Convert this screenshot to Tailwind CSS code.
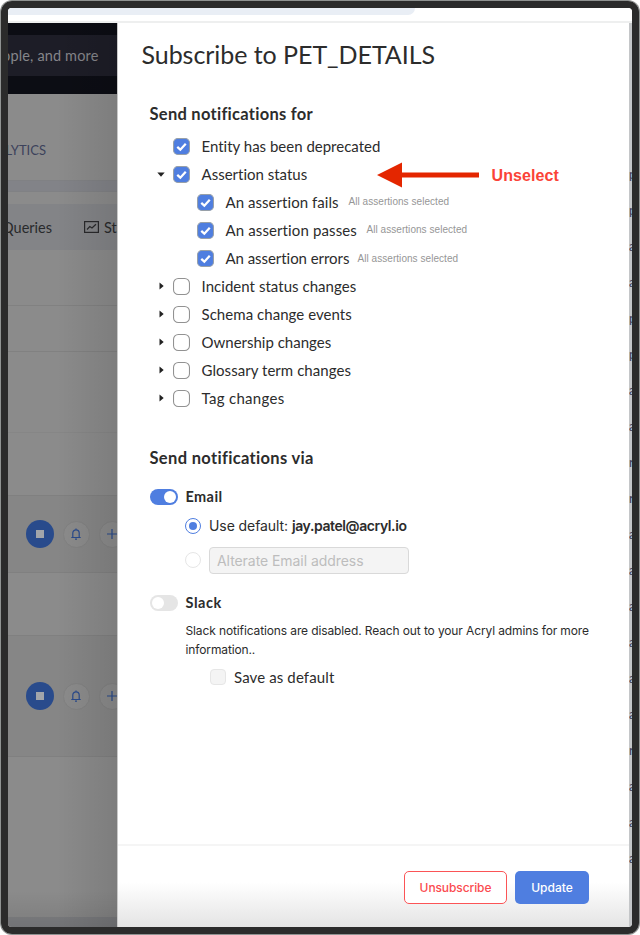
<!DOCTYPE html>
<html lang="en">
<head>
<meta charset="utf-8">
<title>Subscribe to PET_DETAILS</title>
<script src="https://cdn.jsdelivr.net/npm/@tailwindcss/browser@4"></script>
</head>
<body class="bg-white overflow-hidden font-['Lato',sans-serif] text-[#2c2c2c] [font-variant-ligatures:none]">
<svg class="hidden">
  <symbol id="check" viewBox="0 0 16 16"><rect x=".5" y=".5" width="15" height="15" rx="4" fill="#4f7ee0" stroke="#98a0a8"/><path d="M4 8.300 6.900 11 12 5.300" fill="none" stroke="#fff" stroke-width="2.100"/></symbol>
  <symbol id="box" viewBox="0 0 16 16"><rect x=".5" y=".5" width="15" height="15" rx="4.500" fill="#fff" stroke="#929292"/></symbol>
  <symbol id="bell" viewBox="0 0 12 12"><path d="M2.800 9.300V5a3.200 3.200 0 0 1 6.400 0v4.300M1.300 9.500h9.400M6 .5v1.300M5 11.200h2" fill="none" stroke="#294a8c" stroke-width="1.200"/></symbol>
  <symbol id="plus" viewBox="0 0 12 12"><path d="M6 1v10M1 6h10" fill="none" stroke="#294a8c" stroke-width="1.200"/></symbol>
</svg>
<div class="w-[638px] h-[933px] m-px rounded-[11px] border-7 border-[#2b2b2b] ring-1 ring-[#8f9291] overflow-hidden flex flex-col whitespace-nowrap">
  <!-- browser strip -->
  <div class="h-[15px] shrink-0 bg-white border-b-2 border-[#eeefef]"><div class="h-[7px] w-[407px] bg-[#e9eef5] rounded-br-[10px]"></div></div>
  <div class="flex-1 flex min-h-0">
    <!-- dimmed page -->
    <div class="relative w-[109px] shrink-0 bg-[#8b8b8b] overflow-hidden flex flex-col">
      <div class="h-[71px] shrink-0 bg-[#0c0d14] pt-[12px]"><div class="h-[41px] bg-[#1d1d27] flex items-center justify-end pr-[18.500px] text-[14.5px] tracking-[0.150px] text-[#85858a]">people, and more</div></div>
      <div class="h-[86px] shrink-0 flex items-center justify-end pr-[71px] pt-[27px] text-[13px] text-[#3c425b]">ANALYTICS</div>
      <div class="h-[12px] shrink-0 bg-[#828388] border-y border-[#808184]"></div>
      <div class="h-[12px] shrink-0"></div>
      <div class="h-[46px] shrink-0 bg-[#838487] flex items-center text-[14.5px] text-[#292a2c]">
        <span class="w-[44px] flex justify-end shrink-0 pt-[2px]">Queries</span>
        <svg class="ml-[32px] mr-[5px] w-[15px] h-[12px] shrink-0" viewBox="0 0 15 12" fill="none" stroke="#29292b"><rect x=".6" y=".6" width="13.800" height="10.800" stroke-width="1.200"/><path d="M3 8.500 5.800 5.500 8 7 12 3.300" stroke-width="1.200"/></svg><span class="pt-[2px]">Stats</span>
      </div>
      <div class="h-[56px] shrink-0 border-b border-[#818181]"></div>
      <div class="h-[46px] shrink-0 border-b border-[#818181]"></div>
      <div class="h-[81px] shrink-0 border-b border-[#868686]"></div>
      <div class="h-[62px] shrink-0"></div>
      <div class="h-[78px] shrink-0 bg-[#868686] border-y border-[#808080] flex items-center pl-[18px] gap-[9px]">
        <span class="size-[28px] shrink-0 rounded-full bg-[#294b8c] grid place-items-center"><i class="size-[8px] bg-[#a2a5aa]"></i></span>
        <span class="size-[27px] ml-[-0.500px] shrink-0 rounded-full bg-[#8b8b8b] border border-[#818181] grid place-items-center"><svg class="size-[12px]"><use href="#bell"/></svg></span>
        <span class="size-[27px] shrink-0 rounded-full bg-[#8b8b8b] border border-[#818181] grid place-items-center"><svg class="size-[12px]"><use href="#plus"/></svg></span>
      </div>
      <div class="h-[62px] shrink-0"></div>
      <div class="h-[122px] shrink-0 bg-[#868686] border-y border-[#808080] flex items-center pl-[18px] gap-[9px]">
        <span class="size-[28px] shrink-0 rounded-full bg-[#294b8c] grid place-items-center"><i class="size-[8px] bg-[#a2a5aa]"></i></span>
        <span class="size-[27px] ml-[-0.500px] shrink-0 rounded-full bg-[#8b8b8b] border border-[#818181] grid place-items-center"><svg class="size-[12px]"><use href="#bell"/></svg></span>
        <span class="size-[27px] shrink-0 rounded-full bg-[#8b8b8b] border border-[#818181] grid place-items-center"><svg class="size-[12px]"><use href="#plus"/></svg></span>
      </div>
      <div class="flex-1"></div>
      <div class="h-[10px] shrink-0 bg-[#7f8083]"></div>
      <div class="absolute inset-0 bg-linear-to-r from-transparent from-45% to-black/10"></div>
      <div class="absolute inset-x-0 bottom-0 h-[36px] bg-linear-to-b from-transparent to-black/10"></div>
    </div>
    <!-- drawer -->
    <main class="w-[512px] shrink-0 flex flex-col bg-white border-l border-[#c8c8c8]">
      <h1 class="pl-[23.500px] pt-[14px] h-[76px] text-[25px] leading-[34px] tracking-[-0.05px]">Subscribe to PET_DETAILS</h1>
      <section class="pl-[32px] h-[344px] text-[15px]">
        <h2 class="-ml-[0.500px] h-[33px] leading-[31px] text-[16.500px] font-bold tracking-[0.270px]">Send notifications for</h2>
        <div class="h-[28px] flex items-center pl-[23px]"><svg class="size-[17px] mr-[11.500px]"><use href="#check"/></svg><span>Entity has been deprecated</span></div>
        <div class="relative h-[28px] flex items-center pl-[7px]"><svg class="w-[8px] h-[5px] mr-[8px]" viewBox="0 0 8 5"><path d="M.3.500h7.400L4 4.800z" fill="#222"/></svg><svg class="size-[17px] mr-[11.500px]"><use href="#check"/></svg><span>Assertion status</span>
          <div class="absolute left-[227px] top-0 h-[30px] flex items-center gap-[12.500px]"><svg class="w-[102px] h-[26px]" viewBox="0 0 102 26"><path d="M0 13 25 .5V10.500h77v5H25v10z" fill="#e42600"/></svg><b class="pt-[2px] font-['Liberation_Sans',sans-serif] text-[16px] tracking-[0.100px] text-[#fb4337]">Unselect</b></div>
        </div>
        <div class="h-[28px] flex items-center pl-[47px]"><svg class="size-[17px] mr-[11.500px]"><use href="#check"/></svg><span class="w-[114px] tracking-[0.050px]">An assertion fails</span><small class="ml-[9px] pb-[2px] font-['Liberation_Sans',sans-serif] text-[10px] tracking-[0.050px] text-[#969696]">All assertions selected</small></div>
        <div class="h-[28px] flex items-center pl-[47px]"><svg class="size-[17px] mr-[11.500px]"><use href="#check"/></svg><span class="w-[132px] tracking-[0.120px]">An assertion passes</span><small class="ml-[9px] pb-[1px] font-['Liberation_Sans',sans-serif] text-[10px] tracking-[0.050px] text-[#969696]">All assertions selected</small></div>
        <div class="h-[28px] flex items-center pl-[47px]"><svg class="size-[17px] mr-[11.500px]"><use href="#check"/></svg><span class="w-[124px] -tracking-[0.050px]">An assertion errors</span><small class="ml-[8px] pt-[1px] font-['Liberation_Sans',sans-serif] text-[10px] tracking-[0.050px] text-[#969696]">All assertions selected</small></div>
        <div class="h-[28px] flex items-center pl-[9px]"><svg class="w-[5px] h-[8px] mr-[9px]" viewBox="0 0 5 8"><path d="M.5.500v7L4.700 4z" fill="#222"/></svg><svg class="size-[17px] mr-[11.500px]"><use href="#box"/></svg><span class="tracking-[0.040px]">Incident status changes</span></div>
        <div class="h-[28px] flex items-center pl-[9px]"><svg class="w-[5px] h-[8px] mr-[9px]" viewBox="0 0 5 8"><path d="M.5.500v7L4.700 4z" fill="#222"/></svg><svg class="size-[17px] mr-[11.500px]"><use href="#box"/></svg><span class="tracking-[0.050px]">Schema change events</span></div>
        <div class="h-[28px] flex items-center pl-[9px]"><svg class="w-[5px] h-[8px] mr-[9px]" viewBox="0 0 5 8"><path d="M.5.500v7L4.700 4z" fill="#222"/></svg><svg class="size-[17px] mr-[11.500px]"><use href="#box"/></svg><span>Ownership changes</span></div>
        <div class="h-[28px] flex items-center pl-[9px]"><svg class="w-[5px] h-[8px] mr-[9px]" viewBox="0 0 5 8"><path d="M.5.500v7L4.700 4z" fill="#222"/></svg><svg class="size-[17px] mr-[11.500px]"><use href="#box"/></svg><span class="tracking-[0.050px]">Glossary term changes</span></div>
        <div class="h-[28px] flex items-center pl-[9px]"><svg class="w-[5px] h-[8px] mr-[9px]" viewBox="0 0 5 8"><path d="M.5.500v7L4.700 4z" fill="#222"/></svg><svg class="size-[17px] mr-[11.500px]"><use href="#box"/></svg><span class="tracking-[0.300px]">Tag changes</span></div>
      </section>
      <section class="pl-[31.500px] flex-1">
        <h2 class="h-[40px] leading-[31px] text-[16.500px] font-bold tracking-[0.330px]">Send notifications via</h2>
        <div class="h-[27px] flex items-center gap-[8px]"><span class="w-[28px] h-[16px] rounded-full bg-[#4f7ee0] flex items-center justify-end px-[2px]"><i class="size-[12px] rounded-full bg-white"></i></span><b class="text-[14.5px] tracking-[0.400px]">Email</b></div>
        <div class="h-[31px] pl-[35.500px] flex items-center gap-[8px] text-[14px] font-['Inter',sans-serif]"><span class="size-[16px] shrink-0 rounded-full border border-[#4f7ee0] grid place-items-center"><i class="size-[8px] rounded-full bg-[#4f7ee0]"></i></span><span><span class="tracking-[-0.080px]">Use default:</span> <b class="font-semibold tracking-[-0.400px]">jay.patel@acryl.io</b></span></div>
        <div class="h-[38px] pl-[35.500px] flex items-center gap-[8px] text-[14px] font-['Inter',sans-serif]"><span class="size-[16px] shrink-0 rounded-full border border-[#e6e6e6]"></span><span class="w-[200px] h-[27px] rounded-[4px] border border-[#d9d9d9] bg-[#f4f4f4] text-[#bdbdbd] pl-[7px] leading-[26px] tracking-[-0.060px]">Alterate Email address</span></div>
        <div class="h-[46px] pt-px flex items-center gap-[8px]"><span class="w-[28px] h-[16px] rounded-full bg-[#e5e5e5] flex items-center px-[2px]"><i class="size-[12px] rounded-full bg-white"></i></span><b class="text-[14.5px] tracking-[0.550px]">Slack</b></div>
        <p class="pl-[36px] -mt-[4px] font-['Inter',sans-serif] text-[12px] leading-[19px] tracking-[-0.120px]">Slack notifications are disabled. Reach out to your Acryl admins for more<br>information..</p>
        <div class="mt-[4px] h-[28px] pl-[60.500px] flex items-center gap-[8px] text-[15px]"><span class="size-[16px] rounded-[4px] border border-[#e6e6e6] bg-[#f4f4f4]"></span><span class="tracking-[0.120px]">Save as default</span></div>
      </section>
      <footer class="h-[83px] shrink-0 border-t-2 border-[#f5f5f5] bg-linear-to-b from-white from-45% to-[#e4e4e4] flex justify-end pr-[40px] pt-[25px] gap-[8px] font-['Inter',sans-serif] text-[12px] font-medium">
        <button class="w-[103px] h-[33px] rounded-[5px] border border-[#fb5456] bg-white text-[#fb4b50] -tracking-[0.100px]">Unsubscribe</button>
        <button class="w-[74px] h-[33px] rounded-[5px] bg-[#4f7ee0] text-white">Update</button>
      </footer>
    </main>
    <!-- sliver of the page right of the drawer -->
    <div class="flex-1 bg-[#c4c6c8] overflow-hidden pt-[133px] flex flex-col text-[13px] leading-[36px] text-[#3c425b]">
      <span>p</span><span>p</span><span>a</span><span>a</span><span>p</span><span>p</span><span>a</span><span>a</span><span>r</span><span>r</span><span>a</span><span>a</span><span>a</span><span>a</span><span>a</span><span>a</span><span>r</span><span>a</span><span>a</span><span>a</span>
    </div>
  </div>
</div>
</body>
</html>
